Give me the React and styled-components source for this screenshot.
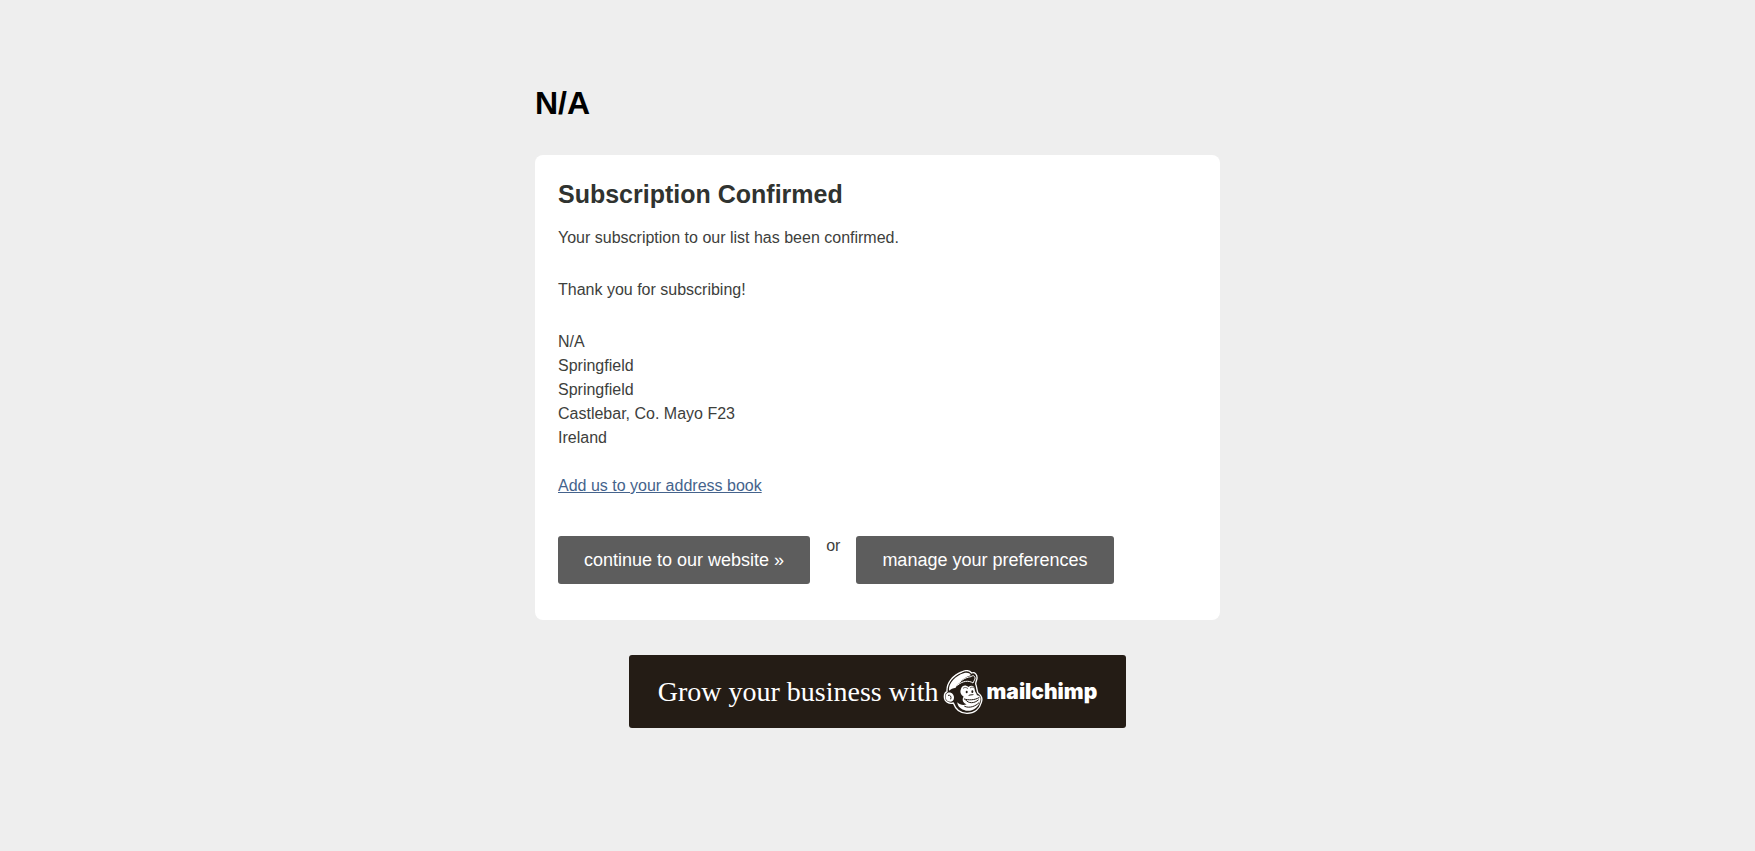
import React from "react";
import styled, { createGlobalStyle } from "styled-components";

const GlobalStyle = createGlobalStyle`
  *, *::before, *::after { box-sizing: border-box; }
  body {
    margin: 0;
    background: #eeeeee;
    color: #3d403c;
    font-family: "Liberation Sans", Arial, sans-serif;
    font-size: 16px;
    line-height: 24px;
  }
`;

const Page = styled.div`
  display: flex;
  flex-direction: column;
  align-items: center;
  padding: 83px 24px;
`;

const Content = styled.main`
  width: 100%;
  max-width: 685px;
`;

const ListName = styled.h1`
  margin: 0 0 32px;
  color: #000;
  font-size: 32px;
  line-height: 40px;
`;

const Card = styled.section`
  padding: 23px 23px 36px;
  border-radius: 8px;
  background: #fff;
`;

const Title = styled.h2`
  margin: 0 0 16px;
  color: #303330;
  font-size: 25px;
  line-height: 32px;
`;

const Paragraph = styled.p`
  margin: 0 0 28px;
`;

const Address = styled.address`
  margin: 0 0 24px;
  font-style: normal;
`;

const AddressLine = styled.div``;

const TextLink = styled.a`
  color: #45638c;
  text-decoration: underline;
`;

const Actions = styled.div`
  display: flex;
  flex-wrap: wrap;
  align-items: flex-start;
  gap: 16px;
  margin-top: 38px;
`;

const Separator = styled.span`
  line-height: 20px;
`;

const Button = styled.button`
  padding: 12px 26px;
  border: 0;
  border-radius: 3px;
  background: #5d5d5d;
  color: #fff;
  font-family: inherit;
  font-size: 18px;
  line-height: 24px;
  cursor: pointer;
`;

const Banner = styled.a`
  display: flex;
  align-items: center;
  justify-content: center;
  width: 100%;
  max-width: 497px;
  min-height: 73px;
  margin-top: 35px;
  border-radius: 3px;
  background: #241c15;
  color: #fff;
  text-decoration: none;
`;

const Slogan = styled.span`
  font-family: "Liberation Serif", "Times New Roman", serif;
  font-size: 28px;
  line-height: 32px;
`;

const Mascot = styled.svg`
  width: 40px;
  height: 44px;
  margin: 0 4px;
`;

const Wordmark = styled.span`
  font-family: Inter, sans-serif;
  font-size: 21px;
  font-weight: 900;
  line-height: 32px;
`;

const addressLines = ["N/A", "Springfield", "Springfield", "Castlebar, Co. Mayo F23", "Ireland"];

function Freddie() {
  return (
    <Mascot viewBox="0 0 120 132" aria-hidden="true">
      {/* outer silhouette */}
      <path
        d="M12 65C10 39 31 15 56 6C68 0 80 2 86 9C96 5 103 15 102 25C101 32 98 36 98 42C102 51 101 61 105 69C115 76 119 86 115 97C110 116 95 130 72 130C53 130 38 119 31 99C18 103 4 94 4 80C4 73 7 67 12 65Z"
        fill="#241c15" stroke="#fff" strokeWidth="4" strokeLinejoin="round"
      />
      {/* cap crown and brim */}
      <path d="M18 62C16 40 38 17 62 10C74 6 83 11 83 16C70 20 49 32 38 53C30 54 23 57 18 62Z" fill="#fff" />
      <path d="M43 46C52 32 66 22 84 20C91 14 97 18 96 27C94 32 91 35 90 39C77 30 58 33 43 46Z" fill="#241c15" stroke="#fff" strokeWidth="3" />
      {/* ear */}
      <path d="M13 69C23 64 33 72 33 83C33 93 24 98 15 94C6 89 5 74 13 69Z" fill="#fff" />
      <path d="M15 76C22 74 26 80 23 88" fill="none" stroke="#241c15" strokeWidth="3" />
      {/* face */}
      <path d="M54 56C58 45 69 44 76 51C86 44 95 48 95 58C95 66 101 70 102 76C113 77 115 86 111 96C104 115 87 125 69 122C54 119 43 109 43 97C51 105 61 107 71 103C59 98 56 88 62 80C52 73 50 65 54 56Z" fill="#fff" />
      <path d="M60 55C65 51 71 52 75 56M81 54C86 50 91 51 94 55" fill="none" stroke="#241c15" strokeWidth="2" />
      <ellipse cx="71" cy="66" rx="3" ry="4" fill="#241c15" />
      <ellipse cx="88" cy="65" rx="3" ry="4" fill="#241c15" />
      <path d="M78 76C82 74 86 75 90 74M64 87C76 91 94 91 108 83M68 90C76 101 94 101 106 90M65 109C79 116 98 109 108 98" fill="none" stroke="#241c15" strokeWidth="3" strokeLinecap="round" />
    </Mascot>
  );
}

export default function App() {
  return (
    <>
      <GlobalStyle />
      <Page>
        <Content>
          <ListName>N/A</ListName>
          <Card>
            <Title>Subscription Confirmed</Title>
            <Paragraph>Your subscription to our list has been confirmed.</Paragraph>
            <Paragraph>Thank you for subscribing!</Paragraph>
            <Address>
              {addressLines.map((line, index) => (
                <AddressLine key={index}>{line}</AddressLine>
              ))}
            </Address>
            <TextLink href="#address-book">Add us to your address book</TextLink>
            <Actions>
              <Button type="button">continue to our website »</Button>
              <Separator>or</Separator>
              <Button type="button">manage your preferences</Button>
            </Actions>
          </Card>
        </Content>
        <Banner href="#mailchimp">
          <Slogan>Grow your business with</Slogan>
          <Freddie />
          <Wordmark>mailchimp</Wordmark>
        </Banner>
      </Page>
    </>
  );
}
